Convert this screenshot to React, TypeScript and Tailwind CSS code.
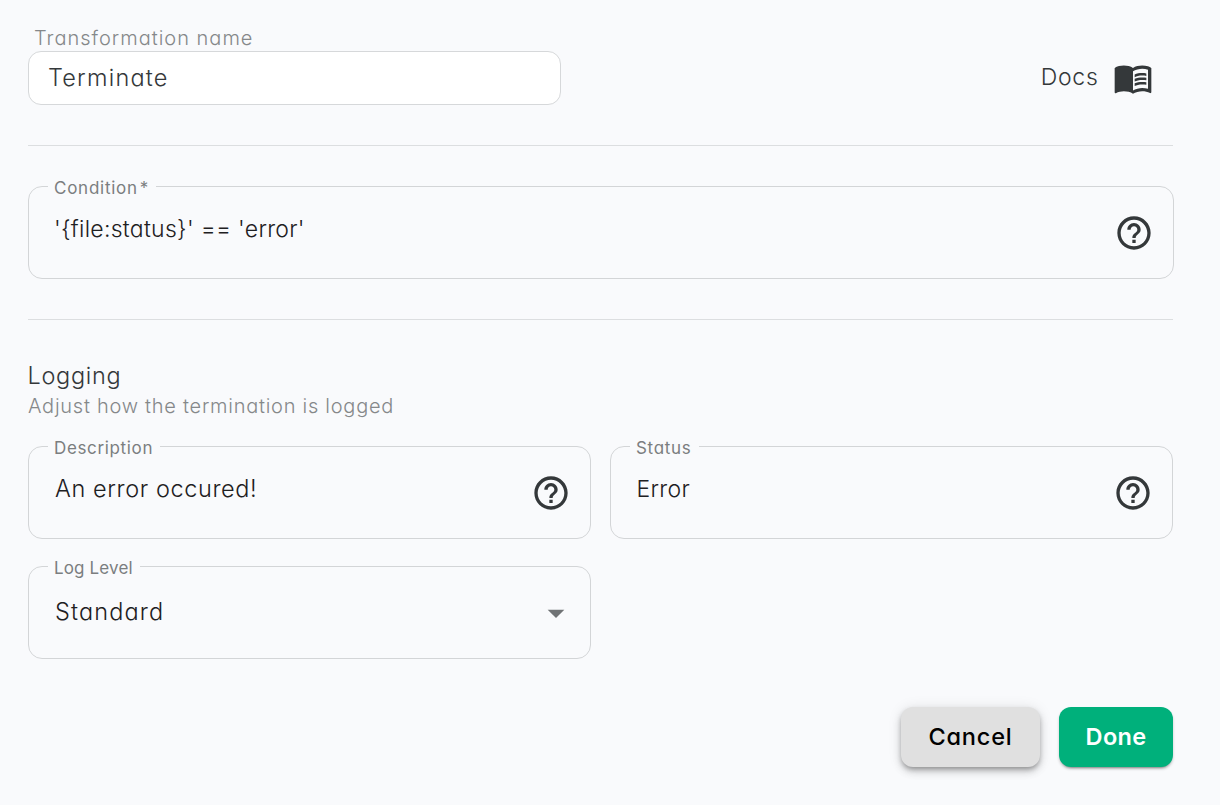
import type { ReactNode } from "react";
import { MdArrowDropDown, MdHelpOutline, MdMenuBook } from "react-icons/md";

function Field({ label, value, icon }: { label: ReactNode; value: ReactNode; icon: ReactNode }) {
  return (
    <fieldset className="h-[93px] min-w-0 rounded-[14px] border border-[#d3d5d7] pl-[19px]">
      <legend className="h-px pr-[7px] pl-[6px] text-[17px] leading-[4px] font-normal whitespace-nowrap text-[#7b7e80]">{label}</legend>
      <div className="flex h-[91px] items-center justify-between pr-[19px] pl-[7px] text-[23px] font-light whitespace-nowrap text-[#1e2022]">
        {value}
        {icon}
      </div>
    </fieldset>
  );
}

export default function App() {
  return (
    <main className="flex h-[805px] w-[1220px] flex-col bg-[#f9fafc] pt-[26px] pr-[46px] pl-[28px] font-['Inter','Noto_Sans',sans-serif] text-[#34383a] [font-feature-settings:'cv11']">
      <header className="flex h-[119px] justify-between">
        <div className="w-[533px]">
          <label className="flex h-[25px] items-center pl-[6px] text-[20px] font-light text-[#85888a]">
            <span className="-mt-px tracking-[1px]">Transformation name</span>
          </label>
          <div className="flex h-[54px] items-center rounded-[13px] border border-[#d6d8da] bg-white pl-[19px] text-[23.5px] font-light">
            <span className="tracking-[1.2px]">Terminate</span>
          </div>
        </div>
        <a className="mt-[31px] mr-[21.5px] flex h-[42px] items-center gap-[14px] text-[23px] font-light">
          <span className="-mt-[2px] tracking-[0.7px]">Docs</span>
          <MdMenuBook className="size-[40px]" />
        </a>
      </header>
      <hr className="w-[1145px] border-[#dcdee0]" />
      <section className="mt-[40px]">
        <Field
          label={<span className="tracking-[0.75px]">Condition<span className="pl-[2px]">*</span></span>}
          value={<span className="-mt-[6px] -ml-px tracking-[0.28px]">{"'{file:status}' == 'error'"}</span>}
          icon={<MdHelpOutline className="size-[40px] text-[#34383a]" />}
        />
      </section>
      <hr className="mt-[40px] w-[1145px] border-[#dcdee0]" />
      <section className="mt-[40px] w-[1145px]">
        <h2 className="h-[32px] text-[23.5px] leading-[32px] font-light"><span className="-ml-[0.5px] tracking-[0.7px]">Logging</span></h2>
        <p className="h-[28px] text-[20px] leading-[28px] font-light text-[#85888a]"><span className="tracking-[0.74px]">Adjust how the termination is logged</span></p>
        <div className="mt-[26px] grid grid-cols-[563px_563px] justify-between gap-y-[27px]">
          <Field
            label={<span className="tracking-[0.65px]">Description</span>}
            value={<span className="-mt-[8px] text-[23.5px] tracking-[0.6px]">An error occured!</span>}
            icon={<MdHelpOutline className="size-[40px] text-[#34383a]" />}
          />
          <Field
            label={<span className="tracking-[0.7px]">Status</span>}
            value={<span className="-mt-[6px] -ml-[0.5px] tracking-[0.3px]">Error</span>}
            icon={<MdHelpOutline className="size-[40px] text-[#34383a]" />}
          />
          <Field
            label={<span className="tracking-[0.15px]">Log Level</span>}
            value={<span className="-mt-[2px] text-[23.5px] tracking-[1.15px]">Standard</span>}
            icon={<MdArrowDropDown className="-mr-[5px] size-[40px] text-[#707375]" />}
          />
        </div>
      </section>
      <footer className="mt-[48px] flex w-[1145px] justify-end gap-[19px] text-[23.5px] font-medium">
        <button className="h-[60px] w-[139px] rounded-[12px] bg-[#e0e0e0] text-black shadow-[0_3px_5px_-1px_rgba(0,0,0,0.3),0_5px_8px_rgba(0,0,0,0.14),0_1px_14px_rgba(0,0,0,0.1)]"><span className="tracking-[0.8px]">Cancel</span></button>
        <button className="h-[60px] w-[114px] rounded-[12px] bg-[#00b07b] font-semibold text-white shadow-[0_3px_2px_-2px_rgba(0,0,0,0.3),0_2px_3px_rgba(0,0,0,0.2)]"><span className="tracking-[0.3px]">Done</span></button>
      </footer>
    </main>
  );
}
